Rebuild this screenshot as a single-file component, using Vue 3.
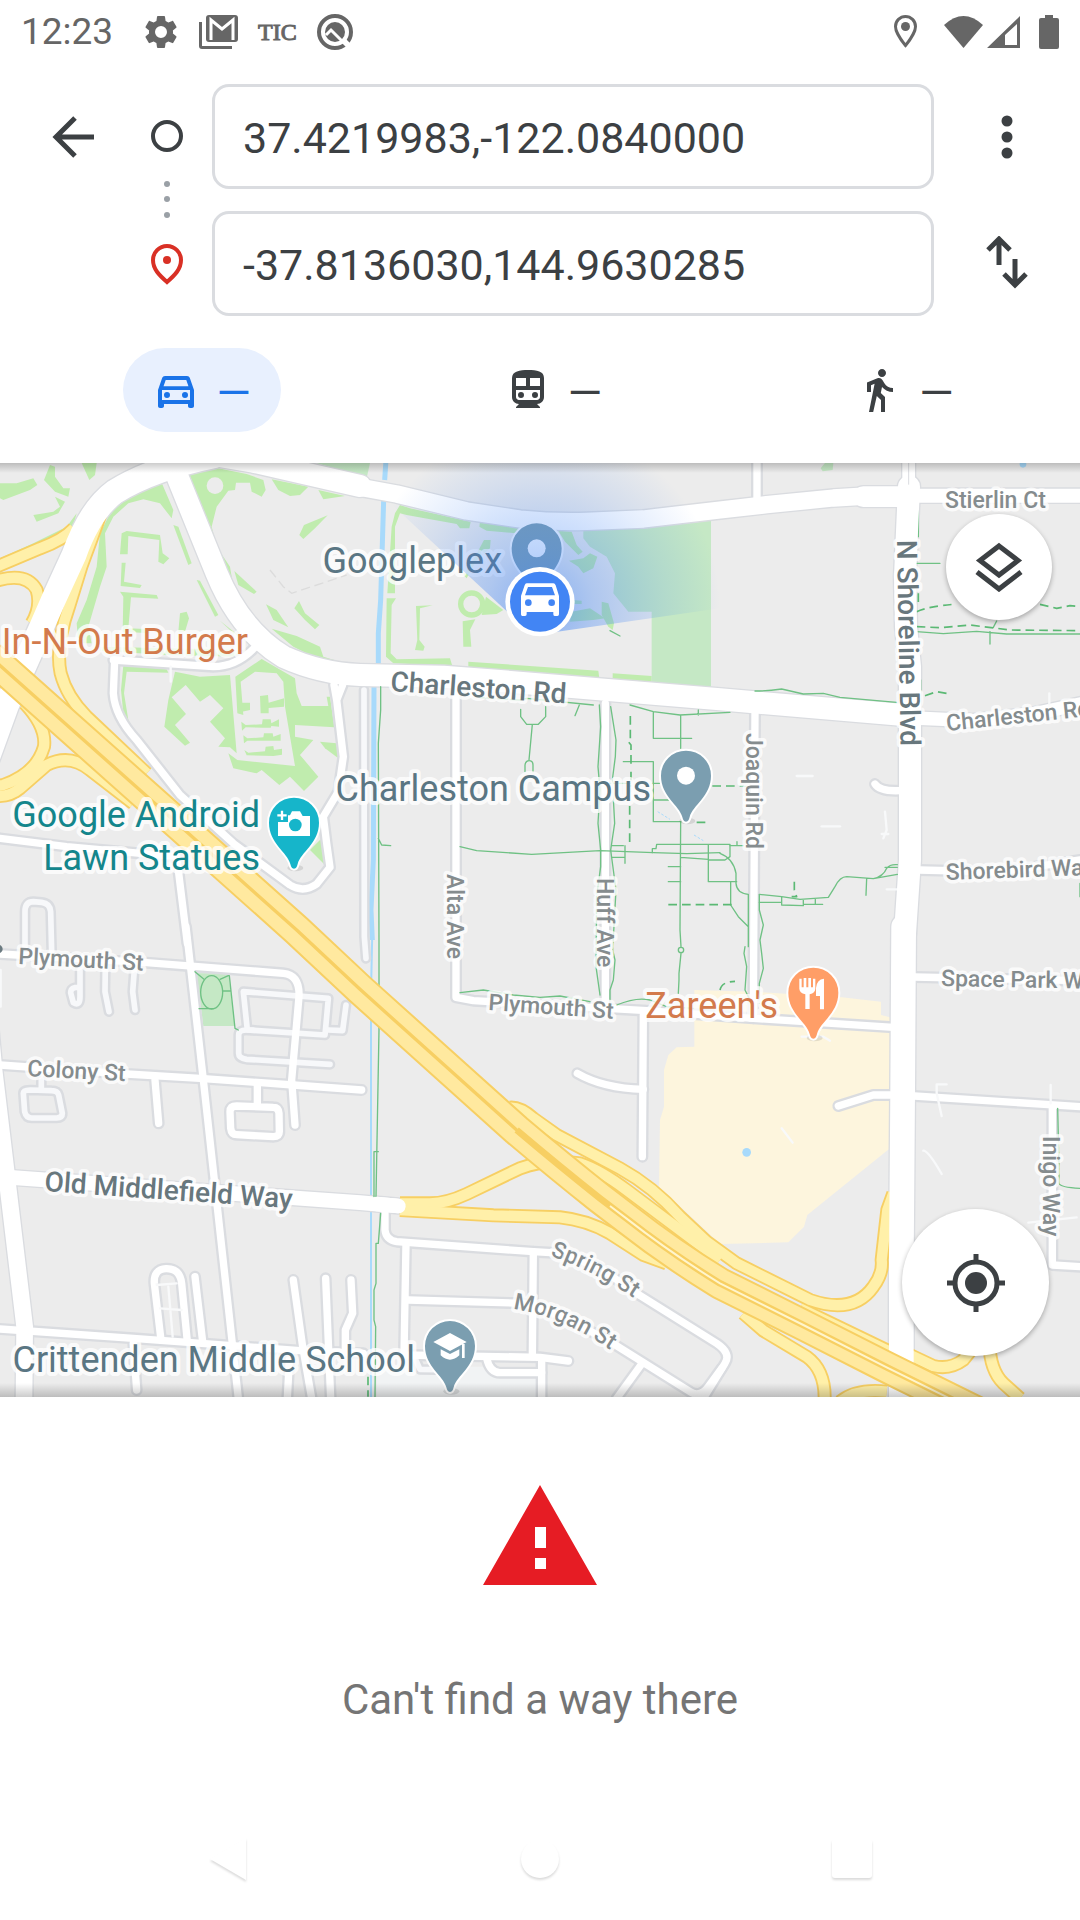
<script setup>
import { ref } from 'vue'

const origin = ref('37.4219983,-122.0840000')
const destination = ref('-37.8136030,144.9630285')
const mode = ref('drive')
const modes = [
  { id: 'drive', name: 'Driving' },
  { id: 'transit', name: 'Transit' },
  { id: 'walk', name: 'Walking' },
]

/* Map geometry is kept in a 3240-unit wide grid, three units to a map pixel. */
const greens = [
  'M0 70 50 70 100 55 112 75 90 90 10 120 0 115z',
  'M132 60 150 15 165 20 165 50 190 85 210 85 205 110 165 95z',
  'M165 110 195 125 175 160 110 185 100 165 160 155 180 140z',
  'M245 9 290 9 285 45 268 60z',
  'M0 295 100 250 200 200 230 160 215 215 120 255 0 320z',
  'M485 68 520 150 515 175 480 130 430 118 385 130 340 170 315 220 320 320 300 380 265 500 275 550 235 550 230 490 260 420 290 320 300 220 350 120z',
  'M520 195 535 200 575 310 565 315z',
  'M590 360 600 362 655 465 645 470z',
  'M660 482 720 530 700 520z',
  'M553 40 640 22 740 42 790 60 797 90 785 110 755 95 750 68 708 68 705 90 685 92 650 140 635 200 650 260 690 320 700 380z',
  'M815 58 925 80 900 105 870 108 835 90z',
  'M955 90 1035 108 970 118z',
  'M983 166 945 205 910 237 898 225 912 195z',
  'M703 333 770 395 762 402 715 375z',
  'M798 433 830 450 865 502 820 480z',
  'M897 423 915 460 958 495 945 508 915 480 883 445z',
  'M815 506 890 528 960 560 970 590 1010 602 960 600 880 560z',
  'M365 220 380 213 480 225 488 280 508 295 490 313 475 305 478 240 385 228 383 283 360 283z',
  'M365 308 377 308 372 365 425 375 420 384 362 378z',
  'M360 395 470 405 475 416 393 412 385 505 450 508 450 520 368 515 370 410z',
  'M540 460 560 455 567 475 555 515 535 515z',
  'M300 560 740 570 720 590 500 585 300 572z',
  'M370 616 500 628 505 638 380 635 372 700 385 780 412 830 400 830 370 760 363 690z',
  'M525 635 600 650 690 645 710 880 690 862 655 860 675 835 630 785 670 745 630 705 600 725 557 675 515 712 558 762 525 795 570 848 555 857 493 800 505 720z',
  'M685 880 712 900 885 918 855 740 850 665 830 640 765 635 722 665 730 765 712 760 706 650 785 597 885 655 890 700 905 738 985 738 980 710 990 710 1003 802 885 795 885 830 940 840 900 885 955 950 912 993 870 950 838 975 785 930 770 940 700 925z',
  'M780 708 804 705 806 728 852 715 852 740 806 744 806 760 782 760z',
  'M726 728 750 728 750 750 726 755z',
  'M724 785 737 795 786 793 788 778 812 778 814 790 837 778 837 800 814 798 812 803 788 803 737 802 726 812z',
  'M730 826 742 835 790 832 792 820 818 820 820 830 842 822 842 842 792 842 742 842 732 850z',
  'M733 870 745 878 795 874 797 860 820 858 822 870 846 866 846 884 820 888 740 886z',
  'M960 845 1010 850 1015 895 975 865z',
  'M930 1170 962 1138 975 1215z',
  'M1200 135 1230 145 1412 185 1408 205 1380 205 1370 192 1220 165 1200 160 1185 200 1185 400 1162 400 1175 200 1185 160z',
  'M1160 415 1188 415 1175 435 1172 580 1190 598 1350 595 1357 618 1180 610 1158 590z',
  'M1405 605 1795 632 1798 655 1405 625z',
  'M1838 640 1955 648 1955 667 1838 657z',
  'M1440 185 1560 205 1548 220 1460 212 1438 200z',
  'M1452 240 1472 240 1470 265 1430 300 1400 355 1390 345 1425 290z',
  'M1445 465 1458 410 1510 450 1490 462z',
  'M1388 484 1426 478 1410 510 1414 560 1390 560z',
  'M1248 438 1298 436 1260 445 1258 540 1274 560 1270 572 1245 570 1252 540z',
  'M1675 212 1715 215 1730 255 1748 275 1735 285 1695 245z',
  'M1707 302 1750 295 1770 280 1792 290 1780 325 1750 340 1735 320z',
  'M1715 455 1770 445 1815 475 1780 480 1710 485z',
  'M1805 425 1825 430 1842 490 1838 510 1825 500 1805 465z',
  'M1720 420 1745 422 1745 432 1720 432z',
]

const parks = [
  'M1750 200 2133 170 2133 682 1955 667 1955 455 1885 455 1840 400 1845 340 1820 290 1770 260 1750 235z',
  'M590 1540 685 1540 705 1698 610 1698z',
  'M950 9 1110 9 1100 55z',
  'M2462 25 2475 9 2500 9 2498 30 2468 34z',
]

const lightStreets = [
  'M75 1460V1355Q75 1325 100 1325L125 1327Q150 1330 152 1355L155 1475',
  'M240 1530V1610Q240 1640 220 1628L212 1598Q212 1580 240 1582',
  'M316 1520 315 1595 327 1655',
  'M403 1530 398 1595 405 1650',
  'M124 1860V1890M70 1900Q70 1890 90 1890L155 1892Q172 1892 176 1905L187 1960Q187 1974 170 1974L95 1974Q78 1974 74 1955z',
  'M730 1595 985 1615 975 1725 742 1710z',
  'M985 1710 1028 1712 1038 1635',
  'M760 1710H740Q716 1710 716 1725V1780Q716 1795 740 1798L990 1813',
  'M1092 690 1093 1430 1098 1495',
  'M1243 2690 1260 2728 1360 2730',
]

const streets = [
  'M340 600 640 620Q710 620 765 562',
  'M344 600 340 700Q345 770 410 840L540 1005 700 1150 870 1275Q910 1300 950 1272L990 1222 980 1150 970 1070 1015 995 1030 890 1010 720 1002 675',
  'M1028 675 1012 715',
  'M0 1135 200 1160 530 1190 562 1450',
  'M1368 690V1612L1420 1622 1940 1652 2260 1675 2680 1702',
  'M1816 730V1645',
  'M2265 760 2260 1675',
  'M2271 0V120',
  'M2625 972Q2640 995 2700 992',
  'M2757 1230 3000 1236 3240 1200',
  'M2743 1551 3240 1562',
  'M2743 1908 3240 1940',
  'M2515 1938 2620 1905 2670 1905',
  'M3157 1940V2415L3240 2420',
  'M1930 1665 1927 2090',
  'M1732 1840Q1810 1885 1930 1888',
  'M1155 2260V2310Q1158 2340 1190 2345L1600 2375 1690 2380 1800 2425 1910 2500 2150 2650Q2195 2680 2175 2710L2110 2815',
  'M1218 2350 1212 2685 1620 2692 1705 2703',
  'M1225 2520 1570 2530 1690 2570 1830 2645 2070 2795Q2100 2815 2125 2780L2165 2725',
  'M1600 2375 1597 2690',
  'M1460 2695Q1470 2738 1500 2738H1625',
  'M1625 2695V2815',
  'M1928 2708 1850 2815',
  'M0 1482 440 1508 850 1540Q900 1545 897 1610L875 1860 885 1995',
  'M0 1815 380 1842 600 1855 880 1875 1085 1890',
  'M465 1860 476 1990',
  'M772 1875V1940M690 1955Q690 1938 710 1938L820 1942Q836 1942 837 1960L838 2015Q838 2030 820 2030L710 2024Q694 2024 692 2005z',
  'M0 2607 400 2635 900 2672 1090 2680',
  'M483 2640 463 2470Q460 2428 498 2426 540 2425 545 2470L562 2645',
  'M585 2450 608 2645',
  'M880 2460 908 2660 935 2815',
  'M977 2455 992 2815',
  'M1053 2460 1058 2560 1036 2610V2670',
  'M400 2650 410 2790',
  'M868 2700 862 2815',
  'M558 1400 610 1860 715 2815',
]

const roads = [
  { w: 66, d: 'M600 -22 760 5 1080 78' },
  { w: 52, d: 'M1080 82 1190 102 1400 153 1560 177Q1660 187 1760 184L1930 177 2160 150 2300 134 2500 114 2600 108' },
  { w: 62, d: 'M2590 110H2720' },
  { w: 42, d: 'M2740 107H3250' },
  { w: 66, d: 'M520 20 650 340Q720 510 850 590 960 640 1080 645L1330 650 1500 663 2160 718 2720 766' },
  { w: 40, d: 'M2740 774 2920 782 3100 762 3250 730' },
  { w: 38, d: 'M2726 0V90' },
  { w: 50, d: 'M-30 1700-18 1830 25 2190 74 2600 72 2815' },
  { w: 44, d: 'M30 2152 1080 2228 1195 2238' },
]

/* Roads that run over the freeway ramps they meet. */
const upperRoads = [
  { w: 74, d: 'M-40 900 20 735 125 500 160 420 222 285Q270 150 345 95 460 25 640 -12' },
  { w: 66, d: 'M2727 80 2715 350 2718 500 2730 620V1200L2715 1420' },
  { w: 74, d: 'M2711 1400 2708 1900 2704 2400V2815' },
]

const ramps = [
  'M-10 320 120 265Q190 240 222 205',
  'M-10 362Q80 335 110 390 125 440 95 490',
  'M300 165 292 190 244 320 207 440Q165 560 182 640 200 710 260 770L440 940',
  'M74 730Q140 800 132 860 110 940 10 975L-10 978',
  'M-10 1008Q30 1010 60 985L140 915Q210 880 270 930L400 1030',
  'M1200 2230 1290 2230Q1340 2230 1400 2202L1560 2125Q1640 2095 1740 2110 1800 2130 1880 2190L2160 2400',
  'M1200 2250 1480 2266 1680 2272Q1760 2280 1830 2320L1930 2385 2000 2410',
  'M1530 1943Q1560 1940 1600 1975L1670 2025 1860 2125Q1960 2180 2040 2270L2120 2345 2210 2410 2430 2520Q2560 2565 2620 2480 2650 2440 2645 2400L2662 2250 2680 2200',
  'M2400 2545 2680 2680',
  'M2230 2560 2290 2612 2420 2690Q2475 2730 2474 2815',
  'M2730 2685 2800 2718Q2850 2730 2890 2700L2930 2650',
  'M2968 2650Q2970 2730 3010 2770L3060 2815',
  'M2520 2825Q2570 2785 2660 2795',
]

const highway = 'M-30 590 470 1035 890 1410 1080 1588 1550 2010Q1680 2120 1800 2215L1880 2276Q2010 2378 2160 2470L2410 2595 2660 2722 3000 2890'
const median = 'M1550 2010Q1680 2120 1800 2215L1880 2276Q2010 2378 2160 2470L2410 2595 2660 2722 3000 2890'

const paths = [
  'M1142 680V750L1135 850 1137 1440V1710L1128 2210M1135 2075H1122V2210M1142 2260 1135 2350H1128L1128 2470 1122 2490V2580L1127 2600 1125 2810M1135 1135 1145 1155 1172 1157',
  'M1380 1160 1430 1172 1595 1183 1800 1172 1960 1178 2060 1181 2160 1178',
  'M1562 748V770L1580 793H1615L1637 770V740M1597 793 1587 900M1575 935V915Q1577 902 1587 902 1599 902 1599 915V935',
  'M1798 735 1802 800 1794 920 1800 990 1794 1090 1802 1170V1220L1790 1310 1788 1520 1800 1605',
  'M1832 740 1848 840 1846 890 1837 960 1844 1090 1832 1170 1848 1290 1838 1470 1845 1500 1840 1560 1830 1590V1620',
  'M1380 1598 1450 1590 1540 1605 1620 1612 1680 1608 1770 1625M1850 1635Q1910 1610 1950 1620L2000 1640 2080 1645',
  'M1440 713 1560 720 1580 715 1780 735M1890 735 1960 755 2040 765 2190 757M1960 757V835H2075M2042 765V865M1870 905H1960V1085H2042M1957 970H1990M1960 1020H2010M2095 750V765M1830 970H1890',
  'M2042 1085 2040 1410 2043 1460M2037 1540V1560L2035 1600M2043 1480 2037 1540M1957 1178V1166H1968L1970 1153H2190V1190L2175 1200H2125M2125 1153V1265H2210M2005 1220H2042M2005 1265H2042M2042 1192 2125 1198M1835 1192H1875M1835 1157H1870M1875 1157V1210',
  'M2160 1180Q2200 1195 2208 1240V1270Q2210 1300 2245 1303M2278 1303 2345 1310 2400 1318 2485 1312 2505 1280Q2520 1250 2540 1250L2620 1256Q2650 1250 2660 1225 2670 1212 2692 1214M2620 1256 2692 1243M2655 1222H2692M2278 1327H2345V1335L2410 1337V1320M2345 1310V1330M2410 1333H2468M2446 1318V1333M2600 1256 2598 1306M2190 1157H2230M2211 1145V1157',
  'M2192 1265V1335L2215 1370 2245 1400V1460M2245 1305V1400M2278 1305V1350L2290 1395 2280 1440 2285 1480 2290 1525 2278 1570V1630M2235 1460 2232 1480 2240 1520 2235 1590 2250 1620',
  'M2265 693Q2300 693 2345 687L2410 702 2470 700 2520 712 2690 727',
  'M2755 150V230M2750 310H2820M2750 515 2830 521 2930 514 3020 522H3240M2970 515V552M2980 502 2990 483M2762 660V695',
  'M3173 1945 3177 2110V2170Q3180 2182 3240 2185M3240 1270V1310',
  'M585 1535 612 1558M660 1558 685 1547H688L705 1705 715 1710M670 1593H692M597 1646H640',
  'M1725 767 1738 735M1830 512 1860 528',
]

const dashedPaths = [
  'M1891 768V840L1885 845 1893 855V920M1893 935V980M1889 1038V1160',
  'M2090 1087H2120M2005 1334H2195M2137 978H2240M2383 1265V1290L2390 1310H2375',
  'M2750 455Q2780 440 2870 432M3120 433 3170 445 3210 437 3240 440',
  'M2750 500 2820 503 2910 495 3030 510 3240 512',
  'M2775 707 2810 695 2850 702M2755 400V430',
  'M2160 1590Q2165 1565 2205 1564M1104 2750V2810',
]

const slivers = [
  'M512 620V665', 'M2390 948H2438', 'M2465 1099H2520', 'M2655 1055 2660 1110 2650 1135M2645 1122H2665',
  'M2660 1288H2700', 'M2810 1875V1900L2825 1968M2810 1873H2840', 'M3152 1875V1930', 'M2345 2005 2378 2048',
  'M2770 2072Q2785 2072 2825 2142', 'M3085 2288 3230 2272', 'M3148 700V740', 'M480 2545 545 2550M505 2480 518 2630',
  'M470 2475 530 2470', 'M2405 1730H2470L2490 1742', 'M2 1530V1640',
]

const pins = [
  { x: 1610, y: 265, fill: '#7b9eb0', kind: 'dot' },
  { x: 2058, y: 947, fill: '#7b9eb0', kind: 'dot' },
  { x: 882, y: 1088, fill: '#16b5ca', kind: 'camera' },
  { x: 2440, y: 1598, fill: '#ff9e67', kind: 'food' },
  { x: 1350, y: 2658, fill: '#7b9eb0', kind: 'school' },
]

const places = [
  { t: 'Googleplex', x: 502, y: 110, c: 'slate end' },
  { t: 'In-N-Out Burger', x: 248, y: 191, c: 'orange end' },
  { t: 'Google Android', x: 260, y: 364, c: 'teal end' },
  { t: 'Lawn Statues', x: 260, y: 407, c: 'teal end' },
  { t: 'Charleston Campus', x: 651, y: 338, c: 'slate end' },
  { t: "Zareen's", x: 778, y: 555, c: 'orange end' },
  { t: 'Crittenden Middle School', x: 415, y: 909, c: 'slate end' },
]

const streetNames = [
  { t: 'Charleston Rd', x: 390, y: 228, r: 4, c: 'main' },
  { t: 'Old Middlefield Way', x: 44, y: 728, r: 4, c: 'main' },
  { t: 'N Shoreline Blvd', x: 897, y: 77, r: 89, c: 'main' },
  { t: 'Alta Ave', x: 447, y: 411, r: 90, c: '' },
  { t: 'Huff Ave', x: 597, y: 415, r: 90, c: '' },
  { t: 'Joaquin Rd', x: 746, y: 270, r: 90, c: '' },
  { t: 'Inigo Way', x: 1043, y: 673, r: 90, c: '' },
  { t: 'Stierlin Ct', x: 945, y: 45, r: 0, c: '' },
  { t: 'Charleston Rd', x: 947, y: 268, r: -6, c: '' },
  { t: 'Shorebird Way', x: 946, y: 417, r: -2, c: '' },
  { t: 'Space Park Way', x: 941, y: 523, r: 1, c: '' },
  { t: 'Plymouth St', x: 18, y: 501, r: 3, c: '' },
  { t: 'Colony St', x: 27, y: 613, r: 3, c: '' },
  { t: 'Plymouth St', x: 488, y: 547, r: 4, c: '' },
]

function swap() {
  const from = origin.value
  origin.value = destination.value
  destination.value = from
}
</script>

<template>
  <div class="screen">
    <div class="status">
      <div class="status-side">
        <span class="clock">12:23</span>
        <svg class="gear" width="40" height="40" viewBox="0 0 24 24"><path d="M19.14 12.94c.04-.3.06-.61.06-.94s-.02-.64-.07-.94l2.03-1.58c.18-.14.23-.41.12-.61l-1.92-3.32c-.12-.22-.37-.29-.59-.22l-2.39.96c-.5-.38-1.03-.7-1.62-.94l-.36-2.54A.48.48 0 0 0 13.920 2.400h-3.840c-.24 0-.43.17-.47.41l-.36 2.54c-.59.24-1.13.57-1.62.94l-2.39-.96c-.22-.08-.47 0-.59.22L2.740 8.870c-.12.21-.08.47.12.61l2.030 1.580c-.05.3-.09.63-.09.94s.02.64.07.94l-2.030 1.580c-.18.14-.23.41-.12.61l1.920 3.320c.12.22.37.29.59.22l2.390-.96c.5.38 1.030.7 1.620.94l.36 2.540c.05.24.24.41.48.41h3.840c.24 0 .44-.17.47-.41l.36-2.540c.59-.24 1.130-.56 1.620-.94l2.390.96c.22.08.47 0 .59-.22l1.920-3.320c.12-.22.07-.47-.12-.61zM12 15.600a3.600 3.600 0 1 1 0-7.200 3.600 3.600 0 0 1 0 7.200z" /></svg>
        <svg class="mail" width="39" height="34" viewBox="0 0 39 34"><path d="M0 7h3v24h30v3H3q-3 0-3-3z" /><rect x="7" width="32" height="27" rx="3" /><path d="M12 25V5l11 9 11-9v20" fill="none" stroke="#fff" stroke-width="3" /></svg>
        <span class="tic">TIC</span>
        <svg width="36" height="36" viewBox="0 0 36 36"><circle cx="18" cy="18" r="16" fill="none" stroke="#666" stroke-width="4" /><circle cx="18" cy="18" r="10" /><path d="M9 21 14 16 30 32" fill="none" stroke="#fff" stroke-width="3" /><path d="M26 25 32 31" stroke="#fff" stroke-width="4" /></svg>
      </div>
      <div class="status-side">
        <svg class="locate-on" width="23" height="33" viewBox="0 0 23 33"><path d="M11.500 1.500a10 10 0 0 0-10 10c0 7 10 19 10 19s10-12 10-19a10 10 0 0 0-10-10z" fill="none" stroke="#666" stroke-width="3" /><circle cx="11.500" cy="11.500" r="4.500" /></svg>
        <svg class="wifi" width="39" height="32" viewBox="0 0 39 32"><path d="M0 9Q19.500-9 39 9L19.500 32z" /></svg>
        <svg class="signal" width="33" height="32" viewBox="0 0 33 32"><path d="M33 0V32H0zM30 8 18 19V29H30z" fill-rule="evenodd" /></svg>
        <svg width="20" height="34" viewBox="0 0 20 34"><path d="M6 0h8v3h4q2 0 2 2v27q0 2-2 2H2q-2 0-2-2V5q0-2 2-2h4z" /></svg>
      </div>
    </div>

    <header>
      <div class="route">
        <div class="side">
          <button class="icon-button" aria-label="Back">
            <svg width="42" height="42" viewBox="0 0 42 42" fill="none" stroke="#3c4043" stroke-width="5"><path d="M42 21H4M23 2 4 21 23 40" /></svg>
          </button>
        </div>
        <div class="stops">
          <svg width="32" height="172" viewBox="0 0 32 172"><circle cx="16" cy="22" r="14" fill="none" stroke="#3c4043" stroke-width="4" /><g fill="#9aa0a6"><circle cx="16" cy="70" r="3" /><circle cx="16" cy="85" r="3" /><circle cx="16" cy="101" r="3" /></g><path d="M16 132a14 14 0 0 0-14 14c0 9 6 15 14 22 8-7 14-13 14-22a14 14 0 0 0-14-14z" fill="none" stroke="#d93025" stroke-width="4" /><circle cx="16" cy="146" r="4" fill="#d93025" /></svg>
        </div>
        <div class="fields">
          <input v-model="origin" type="text" aria-label="Starting point">
          <input v-model="destination" type="text" aria-label="Destination">
        </div>
        <div class="side">
          <button class="icon-button" aria-label="More options">
            <svg width="12" height="44" viewBox="0 0 12 44" fill="#3c4043"><circle cx="6" cy="6" r="5.500" /><circle cx="6" cy="22" r="5.500" /><circle cx="6" cy="38" r="5.500" /></svg>
          </button>
          <button class="icon-button" aria-label="Swap start and destination" @click="swap">
            <svg width="42" height="56" viewBox="0 0 42 56" fill="none" stroke="#3c4043" stroke-width="5"><path d="M13 29V4M2 14 13 3 24 14M29 23V48M18 38 29 49 40 38" /></svg>
          </button>
        </div>
      </div>
      <nav class="modes">
        <div v-for="m in modes" :key="m.id" class="mode-slot">
          <button class="mode" :class="{ active: mode === m.id }" :aria-label="m.name" @click="mode = m.id">
            <svg width="48" height="48" viewBox="0 0 24 24" fill="currentColor">
              <path v-if="m.id === 'drive'" d="M18.920 6.010C18.720 5.420 18.160 5 17.500 5h-11c-.66 0-1.210.42-1.420 1.010L3 12v8c0 .55.45 1 1 1h1c.55 0 1-.45 1-1v-1h12v1c0 .55.45 1 1 1h1c.55 0 1-.45 1-1v-8zM6.850 7h10.290l1.080 3.110H5.770zM19 17H5v-5h14zM9 14.500a1.500 1.500 0 1 1-3 0 1.500 1.500 0 0 1 3 0zM18 14.500a1.500 1.500 0 1 1-3 0 1.500 1.500 0 0 1 3 0z" fill-rule="evenodd" />
              <path v-else-if="m.id === 'transit'" d="M12 2c-4 0-8 .5-8 4v9.500C4 17.430 5.570 19 7.500 19L6 20.500v.5h12v-.5L16.500 19c1.930 0 3.500-1.570 3.500-3.500V6c0-3.500-3.580-4-8-4zM6 6h5v4H6zM13 6h5v4h-5zM6 12h12v3.500c0 .8-.7 1.500-1.500 1.500h-9C6.700 17 6 16.300 6 15.500zM10 14.500a1.500 1.500 0 1 1-3 0 1.500 1.500 0 0 1 3 0zM17 14.500a1.500 1.500 0 1 1-3 0 1.500 1.500 0 0 1 3 0z" fill-rule="evenodd" />
              <path v-else d="M13.500 5.500c1.100 0 2-.9 2-2s-.9-2-2-2-2 .9-2 2 .9 2 2 2zM9.800 8.900 7 23h2.100l1.800-8 2.100 2v6h2v-7.500l-2.100-2 .6-3C14.800 12 16.800 13 19 13v-2c-1.900 0-3.500-1-4.300-2.400l-1-1.600c-.4-.6-1-1-1.700-1-.3 0-.5.1-.8.1L6 8.300V13h2V9.600z" />
            </svg>
            <span>—</span>
          </button>
        </div>
      </nav>
    </header>

    <main class="map">
      <svg class="canvas" viewBox="0 0 1080 934" preserveAspectRatio="xMidYMid slice" role="img" aria-label="Map of Mountain View">
        <defs>
          <radialGradient id="beam" gradientUnits="userSpaceOnUse" cx="1620" cy="440" r="540">
            <stop offset="0" stop-color="#4285f4" stop-opacity=".6" />
            <stop offset=".3" stop-color="#4285f4" stop-opacity=".36" />
            <stop offset=".7" stop-color="#4285f4" stop-opacity=".14" />
            <stop offset="1" stop-color="#4285f4" stop-opacity="0" />
          </radialGradient>
          <path id="spring" d="M550 793Q598 809 650 846" />
          <path id="morgan" d="M513 846Q565 853 625 897" />
        </defs>

        <g transform="scale(.33333) translate(0 -9)">
          <path d="M2083 1590 2260 1595 2525 1612 2643 1625V1665L2670 1672V2065L2422 2265 2412 2300 2365 2347 2160 2352 1977 2180 1980 1980 1992 1940V1830L2005 1785 2030 1762 2083 1760z" fill="#fdf5dd" />
          <path d="M1130 2720H1640V2811H1130z" fill="#f1f3f4" />
          <g fill="#c0ecae"><path v-for="(d, i) in greens" :key="i" :d="d" /></g>
          <circle cx="645" cy="77" r="25" fill="#ececec" />
          <circle cx="1415" cy="432" r="33" fill="none" stroke="#c0ecae" stroke-width="16" />
          <g fill="#c5e8c5"><path v-for="(d, i) in parks" :key="i" :d="d" /></g>
          <g fill="none" stroke="#a8dafb">
            <path d="M1158 0 1154 60M1151 120 1142 420 1135 520V620M1122 680 1120 1200 1113 1350 1117 1440" stroke-width="15" />
            <path d="M1117 1410 1113 1600V2811" stroke-width="6" />
            <path d="M1973 1055 2010 1078M2082 1125 2110 1142" stroke-width="3" stroke-dasharray="8 5" />
          </g>
          <circle cx="2240" cy="2077" r="13" fill="#a8dafb" />
          <circle cx="3069" cy="13" r="10" fill="#a8dafb" />
          <path d="M810 330 850 380 875 400 1040 345" fill="none" stroke="#dcdcdc" stroke-width="4" stroke-dasharray="28 14" />

          <g fill="none" stroke-linecap="round" stroke-linejoin="round">
            <g stroke="#dadce0">
              <path v-for="(d, i) in lightStreets" :key="i" :d="d" stroke-width="32" />
              <path v-for="(d, i) in streets" :key="i" :d="d" stroke-width="36" />
              <path v-for="(r, i) in roads" :key="i" :d="r.d" :stroke-width="r.w + 8" />
              <path v-for="(r, i) in upperRoads" :key="i" :d="r.d" :stroke-width="r.w + 8" />
            </g>
            <path v-for="(d, i) in lightStreets" :key="i" :d="d" stroke="#f7f8fa" stroke-width="17" />
            <g stroke="#fff">
              <path v-for="(d, i) in streets" :key="i" :d="d" stroke-width="22" />
              <path v-for="(r, i) in roads" :key="i" :d="r.d" :stroke-width="r.w" />
            </g>
            <path v-for="(d, i) in slivers" :key="i" :d="d" stroke="#f8f9fa" stroke-width="7" />
            <g stroke="#6fc184" stroke-width="4">
              <path v-for="(d, i) in paths" :key="i" :d="d" />
              <ellipse cx="635" cy="1597" rx="33" ry="50" />
              <circle cx="2043" cy="1470" r="8" />
            </g>
            <g stroke="#5bb974" stroke-width="5" stroke-dasharray="26 15" stroke-linecap="butt">
              <path v-for="(d, i) in dashedPaths" :key="i" :d="d" />
            </g>
          </g>

          <g fill="none" stroke-linejoin="round">
            <path v-for="(d, i) in ramps" :key="i" :d="d" stroke="#f7cf63" stroke-width="42" />
            <path v-for="(d, i) in ramps" :key="i" :d="d" stroke="#fff0a9" stroke-width="31" />
            <path d="M1130 2232 1195 2238" stroke="#fff" stroke-width="44" stroke-linecap="round" />
            <g stroke="#fff" stroke-linecap="round">
              <path v-for="(r, i) in upperRoads" :key="i" :d="r.d" :stroke-width="r.w" />
            </g>
            <path d="M2726 0V74" stroke="#dadce0" stroke-width="3" />
            <path :d="highway" stroke="#f7cf63" stroke-width="98" />
            <path :d="highway" stroke="#ffe99f" stroke-width="86" />
            <path :d="highway" stroke="#f7cf63" stroke-width="10" />
            <path :d="median" stroke="#f7cf63" stroke-width="20" />
            <path d="M1830 2238 1880 2276Q2010 2378 2160 2470L2410 2595 2660 2722 3000 2890" stroke="#fff5cc" stroke-width="6" />
          </g>
          <circle cx="-5" cy="1467" r="13" fill="#6b7a80" />
        </g>

        <g class="street-names">
          <text v-for="(s, i) in streetNames" :key="i" :class="s.c" :transform="`translate(${s.x} ${s.y}) rotate(${s.r})`">{{ s.t }}</text>
          <text><textPath href="#spring">Spring St</textPath></text>
          <text><textPath href="#morgan">Morgan St</textPath></text>
        </g>
        <g class="places">
          <text v-for="p in places" :key="p.t" :x="p.x" :y="p.y" :class="p.c">{{ p.t }}</text>
        </g>

        <g transform="scale(.33333) translate(0 -9)">
          <g v-for="(p, i) in pins" :key="i" :transform="`translate(${p.x} ${p.y})`">
            <ellipse cx="4" cy="136" rx="24" ry="10" fill="#000" opacity=".1" />
            <path d="M0 138C-7 138-9 132-11 124-20 88-75 62-75 0A75 75 0 0 1 75 0C75 62 20 88 11 124 9 132 7 138 0 138z" :fill="p.fill" stroke="#fff" stroke-width="12" paint-order="stroke" />
            <circle v-if="p.kind === 'dot'" r="27" fill="#fff" />
            <g v-else-if="p.kind === 'camera'" fill="#fff">
              <path d="M-48-2H-18V-22H-12L-6-34H18L26-20H48V40H-48z" />
              <path d="M-36-36V-8M-50-22H-22" stroke="#fff" stroke-width="7" />
              <circle cx="4" cy="7" r="19" :fill="p.fill" />
            </g>
            <g v-else-if="p.kind === 'food'" fill="#fff">
              <path d="M-42-42h7v26h6v-28h8v28h6v-28h8v28h6v-26h7v30q0 12-17 17v44h-13V5q-18-5-18-17zM32-42V50H20V10H8V-14Q10-40 32-42z" />
            </g>
            <g v-else fill="#fff">
              <path d="M-50-12 0-39 50-12 0 15zM36-6h8v42h-8zM-28 10 0 24 28 10V28Q0 54-28 28z" />
            </g>
          </g>
          <path d="M1610 524 1570 500 1150 110V-80H2170V443z" fill="url(#beam)" />
          <circle cx="1620" cy="425" r="104" fill="#fff" />
          <circle cx="1620" cy="425" r="90" fill="#4285f4" />
          <path d="M1580 370H1660Q1665 370 1667 376L1677 408V463Q1677 468 1672 468H1664Q1660 468 1660 463V456H1580V463Q1580 468 1575 468H1567Q1563 468 1563 463V408L1574 376Q1576 370 1580 370zM1584 381 1575 406H1665L1656 381z" fill="#fff" fill-rule="evenodd" />
          <circle cx="1585" cy="428" r="10" fill="#4285f4" />
          <circle cx="1655" cy="428" r="10" fill="#4285f4" />
        </g>
      </svg>
      <button class="fab layers" aria-label="Layers">
        <svg width="48" height="50" viewBox="0 0 48 50" fill="none" stroke="#3c4043" stroke-width="5"><path d="M24 4 43 18.500 24 33 5 18.500zM2 30 24 47 46 30" /></svg>
      </button>
      <button class="fab locate" aria-label="My location">
        <svg width="58" height="58" viewBox="0 0 58 58"><circle cx="29" cy="29" r="21" fill="none" stroke="#3c4043" stroke-width="5" /><circle cx="29" cy="29" r="11" fill="#3c4043" /><path d="M29 0V8M29 50V58M0 29H8M50 29H58" stroke="#3c4043" stroke-width="5" /></svg>
      </button>
    </main>

    <section class="message">
      <svg width="114" height="100" viewBox="0 0 114 100"><path d="M57 0 114 100H0zM52 42V63H63V42zM52 73V84H63V73z" fill="#e61c24" fill-rule="evenodd" /></svg>
      <p>Can't find a way there</p>
    </section>

    <footer class="system-nav">
      <button aria-label="System back"><svg width="44" height="54" viewBox="0 0 44 54"><path d="M40 5V47L4 26z" /></svg></button>
      <button aria-label="Home"><svg width="44" height="54" viewBox="0 0 44 54"><circle cx="22" cy="26" r="19" /></svg></button>
      <button aria-label="Recent apps"><svg width="44" height="54" viewBox="0 0 44 54"><rect x="2" y="6" width="40" height="39" rx="3" /></svg></button>
    </footer>
  </div>
</template>

<style>
body {
  margin: 0;
  background: #fff;
}
</style>

<style scoped>
.screen {
  display: flex;
  flex-direction: column;
  min-height: 100vh;
  font-family: Roboto, "Liberation Sans", sans-serif;
  color: #3c4043;
  background: #fff;
}
svg {
  display: block;
}
button {
  padding: 0;
  border: 0;
  background: none;
  font: inherit;
  color: inherit;
  cursor: pointer;
}
.status {
  display: flex;
  justify-content: space-between;
  height: 63px;
  padding: 0 21px;
  color: #666;
  fill: #666;
}
.status-side {
  display: flex;
  align-items: center;
}
.clock {
  width: 92px;
  font-size: 37px;
  line-height: 65px;
}
.gear {
  margin-left: 28px;
}
.mail {
  margin: 0 20px 0 18px;
}
.tic {
  width: 38px;
  margin-right: 21px;
  font: 24px/60px "Liberation Serif", serif;
  -webkit-text-stroke: 1px #666;
}
.wifi {
  margin-left: 27px;
}
.signal {
  margin: 0 19px 0 4px;
}
.route {
  display: flex;
  padding-top: 21px;
}
.side {
  display: flex;
  flex-direction: column;
  gap: 22px;
  width: 146px;
}
.icon-button {
  display: flex;
  align-items: center;
  justify-content: center;
  height: 105px;
}
.stops {
  display: flex;
  align-items: center;
  width: 61px;
  padding-left: 5px;
}
.fields {
  display: flex;
  flex: 1;
  flex-direction: column;
  gap: 22px;
  min-width: 0;
}
.fields input {
  box-sizing: border-box;
  width: 100%;
  height: 105px;
  padding: 3px 28px 0;
  border: 3px solid #dadce0;
  border-radius: 17px;
  outline: 0;
  background: #fff;
  color: #3c4043;
  font: 43px Roboto, "Liberation Sans", sans-serif;
}
.modes {
  display: flex;
  padding: 32px 0 31px 26px;
}
.mode-slot {
  display: flex;
  flex: 1;
  justify-content: center;
}
.mode {
  display: flex;
  align-items: center;
  justify-content: center;
  gap: 16px;
  width: 158px;
  height: 84px;
  border-radius: 42px;
  font-size: 44px;
}
.mode span {
  padding-top: 6px;
}
.mode.active {
  background: #e8f0fe;
  color: #1a73e8;
}
.map {
  position: relative;
  aspect-ratio: 1080 / 934;
  overflow: hidden;
  background: #ececec;
}
.map::after {
  content: "";
  position: absolute;
  inset: 0;
  background:
    linear-gradient(rgba(0, 0, 0, .2), transparent) top / 100% 10px no-repeat,
    linear-gradient(transparent, rgba(0, 0, 0, .2)) bottom / 100% 14px no-repeat;
  pointer-events: none;
}
.canvas {
  width: 100%;
  height: 100%;
}
.places text,
.street-names text {
  paint-order: stroke;
  stroke: rgba(255, 255, 255, .8);
  stroke-linejoin: round;
}
.places text {
  font-size: 36px;
  stroke-width: 8px;
}
.places .end {
  text-anchor: end;
}
.slate {
  fill: #5a7683;
}
.orange {
  fill: #d37a4c;
}
.teal {
  fill: #14868c;
}
.street-names text {
  font-size: 23px;
  font-weight: 500;
  fill: #858c8e;
  stroke-width: 7px;
}
.street-names .main {
  font-size: 28px;
  fill: #68777d;
}
.fab {
  position: absolute;
  display: flex;
  align-items: center;
  justify-content: center;
  border-radius: 50%;
  background: #fff;
  box-shadow: 0 2px 5px rgba(0, 0, 0, .3);
}
.layers {
  top: 51px;
  right: 28px;
  width: 106px;
  height: 106px;
}
.locate {
  right: 31px;
  bottom: 41px;
  width: 147px;
  height: 147px;
}
.message {
  display: flex;
  flex: 1;
  flex-direction: column;
  align-items: center;
  padding-top: 88px;
}
.message p {
  margin: 88px 0 0;
  font-size: 42px;
  line-height: 54px;
  color: #757575;
}
.system-nav {
  display: flex;
  justify-content: space-between;
  padding: 35px 206px 33px;
  fill: #fff;
}
.system-nav svg {
  filter: drop-shadow(0 2px 1px rgba(0, 0, 0, .14));
}
</style>
